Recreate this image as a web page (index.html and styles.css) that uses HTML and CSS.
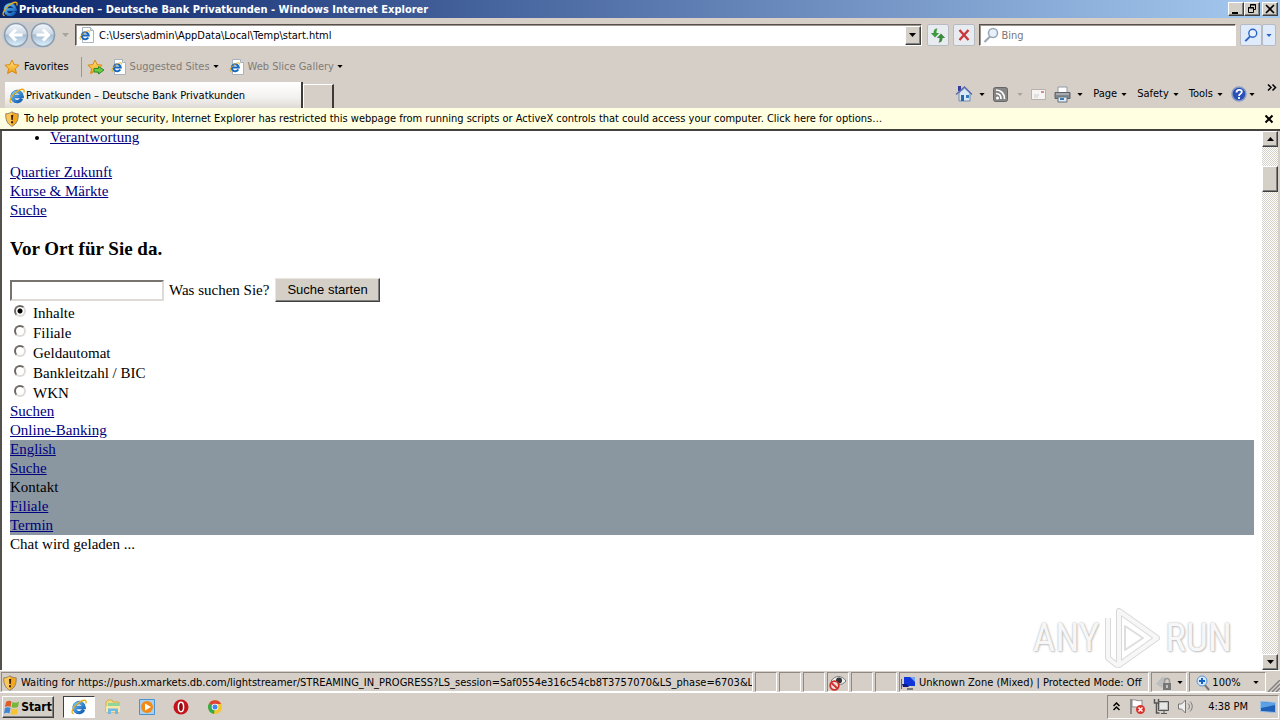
FILE: index.html
```html
<!DOCTYPE html>
<html lang="en">
<head>
<meta charset="utf-8">
<title>Privatkunden – Deutsche Bank Privatkunden</title>
<link rel="stylesheet" href="styles.css">
</head>
<body>
<svg class="defs" width="0" height="0" aria-hidden="true">
  <defs>
    <linearGradient id="orb" x1="0" y1="0" x2="0" y2="1"><stop offset="0" stop-color="#f4f8fc"/><stop offset=".45" stop-color="#ccd8e5"/><stop offset=".5" stop-color="#a6bbd1"/><stop offset="1" stop-color="#dcf3ff"/></linearGradient>
    <linearGradient id="blue" x1="0" y1="0" x2="1" y2="1"><stop offset="0" stop-color="#6cc8f8"/><stop offset="1" stop-color="#1056b0"/></linearGradient>
    <linearGradient id="gold" x1="0" y1="0" x2="0" y2="1"><stop offset="0" stop-color="#ffe680"/><stop offset="1" stop-color="#f09a10"/></linearGradient>
    <symbol id="ie" viewBox="0 0 16 16">
      <path d="M12.6 10.8a5 5 0 1 1 .5-2.3H4.3" fill="none" stroke="#1a66b8" stroke-width="3.400"/>
      <path d="M12.6 10.8a5 5 0 1 1 .5-2.3H4.3" fill="none" stroke="url(#blue)" stroke-width="2.600"/>
      <path d="M2.6 14.6C-.6 14.800 1.500 8.400 7 4.200S16.500.4 14.700 4.600" fill="none" stroke="#e5ac1c" stroke-width="1.300"/>
    </symbol>
    <symbol id="iepage" viewBox="0 0 16 16">
      <path d="M3.500.5h8l3 3v12h-11z" fill="#fff" stroke="#a9b3c0"/><path d="M11.500.5v3h3" fill="#dbe4ee" stroke="#a9b3c0"/>
      <path d="M9.300 10.600a3.500 3.500 0 1 1 .5-2.100H3.500" fill="none" stroke="#1767bd" stroke-width="2"/>
      <path d="M2 12.500C-.5 12 2 8 5.500 5.500S11.500 3.500 10.500 5.500" fill="none" stroke="#dfa918"/>
    </symbol>
    <symbol id="star" viewBox="0 0 16 16"><path d="M8 1l2.100 4.600 5 .6-3.700 3.400 1 5L8 12.100l-4.400 2.500 1-5L.9 6.200l5-.6z" fill="url(#gold)" stroke="#d88a12"/></symbol>
    <symbol id="shield" viewBox="0 0 16 16"><path d="M8 .8c2 1.500 4 1.900 6.200 2C14.500 9 12.700 13 8 15.300 3.300 13 1.500 9 1.800 2.800 4 2.700 6 2.300 8 .8z" fill="#f3a71c" stroke="#8b8478"/><path d="M8 1.500v13.200C4 12.500 2.300 9.200 2.400 3.400 4.300 3.200 6.200 2.700 8 1.500z" fill="#f8c85e"/><path d="M7 4h2.200l-.4 5H7.400zM7 10.300h2v2H7z" fill="#3a2108"/></symbol>
    <symbol id="lens" viewBox="0 0 16 16"><path d="M7 9.500L1.500 15" stroke="currentColor" stroke-width="2.200"/><circle cx="10" cy="6" r="4.500" fill="#e6f1fb" stroke="currentColor" stroke-width="1.600"/></symbol>
    <symbol id="down" viewBox="0 0 7 4"><path d="M0 0h7L3.500 4z" fill="currentColor"/></symbol>
  </defs>
</svg>

<header class="titlebar">
  <svg class="i16"><use href="#ie"/></svg>
  <h1 class="title">Privatkunden – Deutsche Bank Privatkunden - Windows Internet Explorer</h1>
  <div class="winbtns">
    <button class="winbtn" aria-label="Minimize"><svg width="10" height="10"><path d="M1 8h6v2H1z"/></svg></button>
    <button class="winbtn" aria-label="Restore"><svg width="10" height="10" fill="none" stroke="#000"><path d="M3.500 3V.5h5v5H6M3 1h6M1.500 3.500h5v5h-5zM1 4h6"/></svg></button>
    <button class="winbtn winclose" aria-label="Close"><svg width="10" height="10"><path d="M1 1l8 8M9 1L1 9" stroke="#000" stroke-width="1.600"/></svg></button>
  </div>
</header>

<nav class="navbar">
  <div class="travel">
    <button class="orb" aria-label="Back"><svg width="26" height="26" viewBox="0 0 26 26"><circle cx="13" cy="13" r="11.500" fill="url(#orb)" stroke="#8d9dae" stroke-width="1.500"/><path d="M19.500 13H8M13 7.500L7.500 13l5.500 5.500" fill="none" stroke="#fff" stroke-width="3"/></svg></button>
    <button class="orb" aria-label="Forward"><svg width="26" height="26" viewBox="0 0 26 26"><circle cx="13" cy="13" r="11.500" fill="url(#orb)" stroke="#8d9dae" stroke-width="1.500"/><path d="M6.500 13H18M13 7.500l5.500 5.500-5.500 5.500" fill="none" stroke="#fff" stroke-width="3"/></svg></button>
  </div>
  <button class="plain pale" aria-label="Recent pages"><svg class="arr"><use href="#down"/></svg></button>
  <div class="field address">
    <svg class="i16"><use href="#iepage"/></svg>
    <input type="text" aria-label="Address" value="C:\Users\admin\AppData\Local\Temp\start.html">
    <button class="drop" aria-label="Show addresses"><svg class="arr"><use href="#down"/></svg></button>
  </div>
  <button class="tool" aria-label="Refresh"><svg width="16" height="16"><path d="M7.500 1.500C4.500 1.500 3.500 3.500 3.500 6H.8L5 10.500 9.200 6H6.500c0-1.500 0-3 1-4.500z" fill="#3c9a3f"/><path d="M8.500 15.500c3 0 4-2 4-4.500h2.700L11 6.500 6.800 11h2.700c0 1.500 0 3-1 4.500z" fill="#3c8a3f"/></svg></button>
  <button class="tool" aria-label="Stop"><svg width="16" height="16"><path d="M3.500 3l9 10M12.500 3l-9 10" stroke="#c8373a" stroke-width="2.400"/></svg></button>
  <div class="field search">
    <svg class="i16 glass"><use href="#lens"/></svg>
    <input type="text" aria-label="Search" placeholder="Bing">
  </div>
  <div class="searchgo">
    <button class="tool" aria-label="Go"><svg class="i14 azure"><use href="#lens"/></svg></button>
    <button class="tool slim" aria-label="Search options"><svg class="arr small azure"><use href="#down"/></svg></button>
  </div>
</nav>

<div class="favbar">
  <button class="plain favorites"><svg class="i16"><use href="#star"/></svg>Favorites</button>
  <button class="plain addfav" aria-label="Add to Favorites Bar"><svg width="18" height="16"><use href="#star" width="16" height="16"/><path d="M7 9.500h4.500V7.500L17 11l-5.500 4v-2H7z" fill="#6ccb45" stroke="#2f8c24"/></svg></button>
  <button class="plain dim"><svg class="i16"><use href="#iepage"/></svg>Suggested Sites<svg class="arr small"><use href="#down"/></svg></button>
  <button class="plain dim"><svg class="i16"><use href="#iepage"/></svg>Web Slice Gallery<svg class="arr small"><use href="#down"/></svg></button>
</div>

<div class="tabrow">
  <button class="tab"><svg class="i16"><use href="#ie"/></svg>Privatkunden – Deutsche Bank Privatkunden</button>
  <button class="newtab" aria-label="New tab"></button>
  <div class="commands">
    <button class="plain" aria-label="Home"><svg width="18" height="18"><path d="M4 8v8h11V8L9.500 3z" fill="#d9e8f6" stroke="#6d8db4"/><path d="M3 1h3v5H3z" fill="#343ca0"/><path d="M1 9.500L9.500 2l7.500 7.500" fill="none" stroke="#5a6cae" stroke-width="1.500"/><path d="M6 10h3v6H6z" fill="#2c66a8"/><path d="M11 10h3v3h-3z" fill="#337cbb"/></svg><svg class="arr small"><use href="#down"/></svg></button>
    <button class="plain feeds" aria-label="Feeds"><svg width="15" height="15"><rect x=".5" y=".5" width="14" height="14" rx="2" fill="#858585" stroke="#666"/><circle cx="4.500" cy="11" r="1.500" fill="#fff"/><path d="M3 6.500c3 0 5 2 5 5.500M3 3c5 0 8.500 3.500 8.500 9" fill="none" stroke="#fff" stroke-width="1.700"/></svg><svg class="arr small pale"><use href="#down"/></svg></button>
    <button class="plain" aria-label="Read mail"><svg width="15" height="11"><path d="M.5.5h14v10H.5z" fill="#f7f5f3" stroke="#b7b0ad"/><path d="M10 2h3v2h-3z" fill="#d88c8c"/><path d="M3 6h5M3 8h4" stroke="#ccc"/></svg></button>
    <button class="plain" aria-label="Print"><svg width="17" height="17"><path d="M4 1h9v6H4z" fill="#fff" stroke="#8f9aa5"/><path d="M1 6.500h15v6H1z" fill="#81878d" stroke="#5b6066"/><path d="M2 8h13" stroke="#cad0d5"/><path d="M4 11h9v5H4z" fill="#e1edf8" stroke="#65717d"/><path d="M6 13h4" stroke="#387cba" stroke-width="2"/></svg><svg class="arr small"><use href="#down"/></svg></button>
    <button class="plain menu">Page<svg class="arr small"><use href="#down"/></svg></button>
    <button class="plain menu">Safety<svg class="arr small"><use href="#down"/></svg></button>
    <button class="plain menu">Tools<svg class="arr small"><use href="#down"/></svg></button>
    <button class="plain help" aria-label="Help"><svg width="16" height="16"><circle cx="8" cy="8" r="7" fill="#2950b5" stroke="#8a9cc4" stroke-width="1.500"/><path d="M5.500 6.500C5.500 3 11 3 10.800 6 10.600 8 8 7.800 8 10M8 11v2" fill="none" stroke="#fff" stroke-width="1.800"/></svg><svg class="arr small"><use href="#down"/></svg></button>
    <button class="plain more" aria-label="More commands"><svg width="10" height="7" fill="none" stroke="#000" stroke-width="1.500"><path d="M1 .5l3 3-3 3M5.500.5l3 3-3 3"/></svg></button>
  </div>
</div>

<div class="infobar">
  <svg class="i16"><use href="#shield"/></svg>
  <p>To help protect your security, Internet Explorer has restricted this webpage from running scripts or ActiveX controls that could access your computer. Click here for options…</p>
  <button class="plain" aria-label="Dismiss"><svg width="10" height="10"><path d="M1.500 1.500l7 7M8.500 1.500l-7 7" stroke="#000" stroke-width="2"/></svg></button>
</div>

<div class="viewport">
  <main class="page">
    <ul class="list"><li><a href="#">Verantwortung</a></li></ul>
    <div><a href="#">Quartier Zukunft</a></div>
    <div><a href="#">Kurse &amp; Märkte</a></div>
    <div><a href="#">Suche</a></div>
    <h3>Vor Ort für Sie da.</h3>
    <form>
      <div class="searchrow"><input id="q" class="box" type="text"><label for="q">Was suchen Sie?</label><button class="submit" type="button">Suche starten</button></div>
      <div class="option"><input type="radio" name="t" id="r1" checked><label for="r1">Inhalte</label></div>
      <div class="option"><input type="radio" name="t" id="r2"><label for="r2">Filiale</label></div>
      <div class="option"><input type="radio" name="t" id="r3"><label for="r3">Geldautomat</label></div>
      <div class="option"><input type="radio" name="t" id="r4"><label for="r4">Bankleitzahl / BIC</label></div>
      <div class="option"><input type="radio" name="t" id="r5"><label for="r5">WKN</label></div>
    </form>
    <div><a href="#">Suchen</a></div>
    <div><a href="#">Online-Banking</a></div>
    <div class="band">
      <div><a href="#">English</a></div>
      <div><a href="#">Suche</a></div>
      <div>Kontakt</div>
      <div><a href="#">Filiale</a></div>
      <div><a href="#">Termin</a></div>
    </div>
    <div>Chat wird geladen ...</div>
  </main>
  <div class="scroll">
    <button class="scrollbtn" aria-label="Scroll up"><svg class="arr flip"><use href="#down"/></svg></button>
    <div class="track"><div class="thumb"></div></div>
    <button class="scrollbtn" aria-label="Scroll down"><svg class="arr"><use href="#down"/></svg></button>
  </div>
  <div class="watermark">
    <span>ANY</span>
    <svg width="58" height="64" viewBox="0 0 58 64" fill="none" stroke-linejoin="round"><path d="M16 5v54l38-27zM5 12v40l10 8" stroke="#d9d9d9" stroke-width="6"/><path d="M16 5v54l38-27zM5 12v40l10 8" stroke="#f7f7f7" stroke-width="4"/><path d="M22 20v24l18-12z" stroke="#dedede" stroke-width="2"/></svg>
    <span>RUN</span>
  </div>
</div>

<footer class="status">
  <div class="cell message"><svg class="i16"><use href="#shield"/></svg><span>Waiting for https://push.xmarkets.db.com/lightstreamer/STREAMING_IN_PROGRESS?LS_session=Saf0554e316c54cb8T3757070&amp;LS_phase=6703&amp;LS_c</span></div>
  <div class="cell pane"></div><div class="cell pane"></div><div class="cell pane"></div>
  <div class="cell pane"><svg width="19" height="16"><path d="M3 6C7 0 14 0 18 6c-4 5-11 5-15 0z" fill="#eee" stroke="#777"/><circle cx="11" cy="5.500" r="3" fill="#333"/><circle cx="6.500" cy="10.500" r="4.300" fill="#f5dedb" stroke="#c9302c" stroke-width="1.800"/><path d="M3.500 8l6 5.500" stroke="#c9302c" stroke-width="1.800"/></svg></div>
  <div class="cell pane"></div><div class="cell pane"></div>
  <div class="cell zone"><svg width="17" height="16"><path d="M1.500 4v10" stroke="#666"/><path d="M4 2h11v9H4z" fill="#1035d8"/><path d="M10 2h5v5z" fill="#7aa2ff"/><path d="M2 9h5l2 3H3z" fill="#0b1d85"/><path d="M7 13h6v2H7z" fill="#777"/></svg>Unknown Zone (Mixed) | Protected Mode: Off</div>
  <button class="cell lock" aria-label="Privacy"><svg width="17" height="16"><path d="M1 9L7 2l5 1-5 10z" fill="#bdbdbd"/><path d="M9.500 8V6a2.500 2.500 0 0 1 5 0v2" fill="none" stroke="#999" stroke-width="1.500"/><path d="M8 8h8v7H8z" fill="#777"/><path d="M12 10v3" stroke="#ddd" stroke-width="1.500"/></svg><svg class="arr small"><use href="#down"/></svg></button>
  <button class="cell zoom"><svg width="14" height="16"><path d="M8 9l5 6" stroke="#777" stroke-width="2"/><circle cx="6" cy="6" r="5" fill="#d5e9fb" stroke="#5c93d2"/><path d="M6 3v6M3 6h6" stroke="#1764c0" stroke-width="2"/></svg><span>100%</span><svg class="arr small"><use href="#down"/></svg></button>
  <svg class="grip" width="12" height="12"><path d="M0 12L12 0M4 12l8-8M8 12l4-4" stroke="#808080" stroke-width="1.500"/></svg>
</footer>

<div class="taskbar">
  <button class="start"><svg width="17" height="16"><path d="M2 3c2-1.500 4-1.500 5.500-.5L6.500 8C5 7 3 7.200 1 8z" fill="#df5b2b"/><path d="M8.500 3c2 1 4 1 6.500-.5L14 8c-2 1-4.500 1-6.500.2z" fill="#78b63b"/><path d="M1 9c2-1 4-1 5.500 0l-1 5.500C4 13.500 2 13.500 0 14.500z" fill="#3f86d8"/><path d="M7.500 9.500c2 1 4 1 6.500-.2L13 15c-2 1-4.500 1-6.500 0z" fill="#f7c431"/></svg>Start</button>
  <div class="apps">
    <button class="app active" aria-label="Internet Explorer"><svg class="i16"><use href="#ie"/></svg></button>
    <button class="app" aria-label="Explorer"><svg width="16" height="16"><path d="M1 3l2-2h4l1 2h6v10H1z" fill="#f5d982" stroke="#d3ae4c"/><path d="M3 4h11v4H3z" fill="#8fd69a"/><path d="M1 7h14v6H1z" fill="#f9e7a6"/><path d="M3 15V9.500h10V15h-3v-3H6v3z" fill="#72b8e6"/></svg></button>
    <button class="app" aria-label="Media Player"><svg width="16" height="16"><path d="M.5.5h15v15H.5z" fill="#a9d0f0" stroke="#4b93cd"/><circle cx="8" cy="8" r="6" fill="#f28a17"/><path d="M6 4.500v7L12 8z" fill="#fff"/></svg></button>
    <button class="app" aria-label="Opera"><svg width="16" height="16"><circle cx="8" cy="8" r="7.500" fill="#c4141b"/><ellipse cx="8" cy="8" rx="2.600" ry="4.700" fill="#8f0a10" stroke="#fff" stroke-width="1.500"/></svg></button>
    <button class="app" aria-label="Chrome"><svg width="16" height="16"><circle cx="8" cy="8" r="7" fill="#f4c62c"/><path d="M8 8L2 4.500A7 7 0 0 1 14.200 5H8z" fill="#db4437"/><path d="M8 8l-1 7A7 7 0 0 1 2 4.500z" fill="#35a853"/><circle cx="8" cy="8" r="3.300" fill="#fff"/><circle cx="8" cy="8" r="2.500" fill="#4285f4"/></svg></button>
  </div>
  <div class="tray">
    <button class="plain" aria-label="Show hidden icons"><svg width="7" height="9" fill="none" stroke="#000" stroke-width="1.500"><path d="M.5 4l3-3 3 3M.5 8l3-3 3 3"/></svg></button>
    <svg width="17" height="17"><path d="M2 1v15" stroke="#777" stroke-width="1.500"/><path d="M3 2c4-1 6 2 10 0v7c-4 2-6-1-10 0z" fill="#fff" stroke="#888"/><circle cx="11.500" cy="11.500" r="4.500" fill="#d8322b"/><path d="M9.500 9.500l4 4M13.500 9.500l-4 4" stroke="#fff" stroke-width="1.500"/></svg>
    <svg width="17" height="17"><path d="M5.500 3.500h10v9h-10z" fill="#b9b9b9" stroke="#555"/><path d="M7 5h7v6H7z" fill="#e6e6e6"/><path d="M8 15.500h6M11 13v2" stroke="#555"/><path d="M1.500 1v4h4V1M3.500 5v10h3" fill="none" stroke="#555" stroke-width="1.500"/></svg>
    <svg width="18" height="17" fill="none" stroke="#777"><path d="M1.500 6h3l4-4v13l-4-4h-3z" fill="#eee"/><path d="M11 5.500c2 2 2 4 0 6M13 3.500c3 3 3 7 0 10"/></svg>
    <time>4:38 PM</time>
    <svg width="16" height="14"><path d="M.5 1.500l15 1v10l-15-1z" fill="#1e5fb8" stroke="#9dc2e8"/><path d="M1 2l14 1v2L1 8z" fill="#5ba1e4"/></svg>
  </div>
</div>
</body>
</html>
```
FILE: styles.css
```css
* { box-sizing: border-box; }
body {
  margin: 0;
  height: 100vh;
  display: flex;
  flex-direction: column;
  overflow: hidden;
  background: #d6cfc8;
  color: #000;
  font: 11px/14px "DejaVu Sans Condensed", "DejaVu Sans", sans-serif;
}
.defs { position: absolute; }
svg { flex: none; }
button, input { font: inherit; color: inherit; margin: 0; padding: 0; border: 0; border-radius: 0; background: none; }
button { display: flex; align-items: center; justify-content: center; }
.i16 { width: 16px; height: 16px; }
.i14 { width: 14px; height: 14px; }
.arr { width: 7px; height: 4px; }
.arr.small { width: 6px; height: 3px; }
.flip { transform: rotate(180deg); }
.pale { color: #aaa39d; }
.azure { color: #2a63c4; }
.glass { color: #9ba8b5; }
.plain { gap: 4px; white-space: nowrap; }

.titlebar {
  display: flex;
  align-items: center;
  flex: none;
  height: 18px;
  padding: 0 2px;
  background: linear-gradient(to right, #0a246a, #a6caf0);
}
.title { flex: 1; margin: 0 0 0 1px; padding-top: 1px; color: #fff; font-size: 11px; font-weight: bold; }
.winbtns { display: flex; }
.winbtn, .scrollbtn, .thumb, .drop, .start {
  background: #d4d0c8;
  border: 1px solid;
  border-color: #fff #404040 #404040 #fff;
  box-shadow: inset -1px -1px #808080;
}
.winbtn { width: 16px; height: 14px; }
.winclose { margin-left: 2px; }

.navbar { display: flex; align-items: center; flex: none; height: 34px; padding: 0 4px 0 2px; }
.travel { display: flex; border-radius: 13px; background: #c9cbcf; }
.orb { width: 27px; }
.navbar > .plain { width: 18px; margin-right: 1px; }
.field {
  display: flex;
  align-items: center;
  height: 22px;
  padding-left: 3px;
  background: #fff;
  border: 1px solid;
  border-color: #55504a #fff #fff #55504a;
  box-shadow: inset 1px 1px #9b958f;
}
.field input { flex: 1; min-width: 0; padding-top: 2px; outline: 0; }
.field input::placeholder { color: #777; opacity: 1; }
.address { flex: 10; margin-right: 5px; }
.address input { padding-left: 4px; }
.drop { width: 16px; height: 19px; }
.tool { width: 22px; height: 22px; border: 1px solid #b6bac1; border-radius: 2px; background: #e8ebf0; margin-right: 4px; }
.search { flex: 3; margin-right: 4px; }
.search input { padding-left: 3px; }
.searchgo { display: flex; }
.searchgo .tool { margin: 0; background: #dfeafb; }
.searchgo .slim { width: 14px; }

.favbar { display: flex; align-items: center; flex: none; height: 28px; padding: 1px 0 0 4px; gap: 12px; }
.addfav { padding-left: 5px; border-left: 1px solid #9c9690; height: 20px; }
.favbar .addfav { margin-right: -6px; }
.dim { color: #817b76; gap: 3px; }
.dim + .dim { margin-left: -2px; }
.dim .arr { color: #000; }

.tabrow { display: flex; align-items: flex-end; flex: none; height: 28px; padding-left: 5px; }
.tab {
  justify-content: flex-start;
  gap: 1px;
  flex: 0 1 298px;
  height: 26px;
  padding: 2px 0 0 4px;
  white-space: nowrap;
  overflow: hidden;
  background: linear-gradient(#fff, #f3f1ef 60%, #dedad6);
  border-right: 2px solid #3d3a37;
}
.newtab { width: 31px; height: 24px; border: 1px solid #fff; border-right: 2px solid #3d3a37; border-bottom: 0; }
.commands { display: flex; align-items: center; align-self: stretch; margin-left: auto; padding-right: 3px; gap: 8px; }
.commands .arr { margin-left: 2px; }
.commands .feeds .arr { margin-left: 5px; }
.commands .menu { margin-left: 2px; }
.commands .menu .arr, .commands .help .arr { margin-left: 0; }
.commands .help { gap: 2px; }
.more { align-self: flex-start; padding: 4px 0 0 4px; }

.infobar {
  display: flex;
  align-items: center;
  flex: none;
  height: 23px;
  padding: 0 6px 0 4px;
  gap: 4px;
  background: #ffffe1;
  border-bottom: 2px solid #45413d;
}
.infobar p { flex: 1; margin: 0; white-space: nowrap; overflow: hidden; }

.viewport { position: relative; display: flex; flex: 1; min-height: 0; background: #fff; border-left: 2px solid #55514d; border-right: 2px solid #d6cfc8; }
.page { flex: 1; overflow: hidden; padding: 0 8px; font: 15px/19px "Liberation Serif", serif; }
.page a { color: #000080; text-decoration: underline; }
.list { margin: 0 0 19px; padding-left: 40px; line-height: 13px; }
.page h3 { margin: 19px 0; font-size: 19px; line-height: 20px; }
.searchrow { display: flex; align-items: center; height: 24px; }
.box { width: 154px; height: 21px; margin-right: 5px; border: 2px solid; border-color: #77736f #dedad6 #dedad6 #77736f; }
.submit {
  height: 24px;
  margin-left: 6px;
  padding: 0 11px;
  background: #d4d0c8;
  border: 1px solid;
  border-color: #e9e6e0 #404040 #404040 #e9e6e0;
  box-shadow: inset -1px -1px #808080;
  font: 13px/16px "Liberation Sans", sans-serif;
}
.option { display: flex; height: 20px; padding: 2px 0 0 4px; gap: 7px; }
.option input {
  appearance: none;
  width: 12px;
  height: 12px;
  margin-top: 1px;
  border: 2px solid;
  border-color: #6c6864 #dedad6 #dedad6 #6c6864;
  border-radius: 50%;
}
.option input:checked { background: radial-gradient(circle, #000 2px, #fff 3px); }
.band { background: #8b97a0; }

.scroll { display: flex; flex-direction: column; width: 16px; }
.scrollbtn { width: 16px; height: 16px; flex: none; }
.track { flex: 1; padding-top: 19px; background: repeating-conic-gradient(#d4d0c8 0 25%, #fff 0 50%) 0 0 / 2px 2px; }
.thumb { height: 26px; }

.watermark {
  position: absolute;
  right: 46px;
  bottom: 0;
  display: flex;
  align-items: center;
  gap: 4px;
  color: #f7f7f7;
  font: 39px/48px "Roboto Condensed", "Liberation Sans", sans-serif;
  text-shadow: 0 0 2px #aaa, 1px 1px 2px #ccc;
}

.status { display: flex; align-items: center; flex: none; height: 23px; padding: 1px 0 0 1px; gap: 2px; border-top: 1px solid #fff; border-bottom: 1px solid #fff; }
.cell { display: flex; align-items: center; height: 20px; padding-top: 1px; border: 1px solid; border-color: #8f8983 #fff #fff #8f8983; }
.message { flex: 1; min-width: 0; gap: 3px; overflow: hidden; white-space: nowrap; }
.message span { overflow: hidden; }
.pane { width: 22px; flex: none; }
.zone { width: 250px; gap: 2px; white-space: nowrap; }
.lock { width: 36px; gap: 5px; }
.zoom { width: 77px; gap: 2px; }
.zoom .arr { margin-left: 10px; }
.grip { align-self: flex-end; }

.taskbar { display: flex; align-items: center; flex: none; height: 27px; padding: 0 1px 0 2px; }
.start { width: 52px; height: 22px; font-weight: bold; font-size: 12px; }
.apps { display: flex; flex: 1; margin-left: 9px; gap: 2px; }
.app { width: 32px; height: 22px; }
.active { background: #fff; border: 1px solid; border-color: #404040 #fff #fff #404040; }
.tray { display: flex; align-items: center; height: 24px; padding: 0 2px 0 5px; gap: 7px; border: 1px solid; border-color: #8f8983 #fff #fff #8f8983; }
.tray .plain { margin-right: 2px; }
.tray time { margin: 0 5px 0 6px; white-space: nowrap; }
```
